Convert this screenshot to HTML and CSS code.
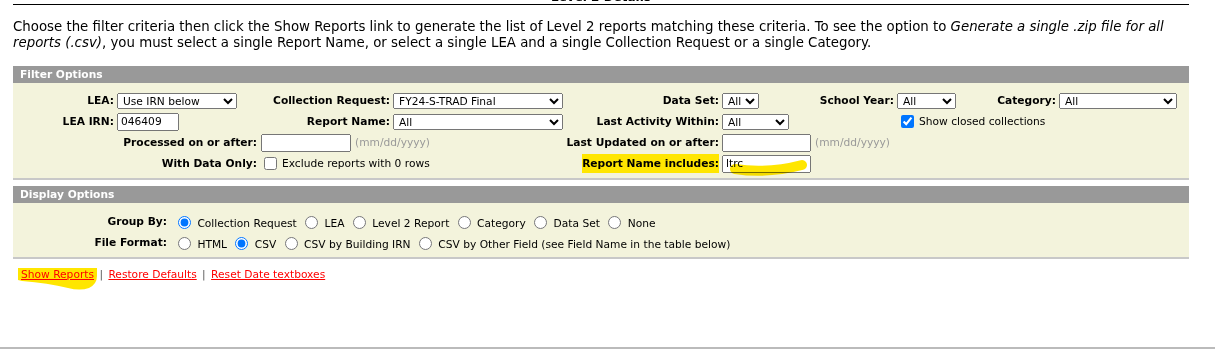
FILE: index.html
```html
<!DOCTYPE html>
<html lang="en">
<head>
  <meta charset="UTF-8">
  <title>Level 2 Details</title>
  <link rel="stylesheet" href="styles.css">
</head>
<body>

  <div class="page">
    <h1 class="page-title">Level 2 Details</h1>

    <p class="intro">Choose the filter criteria then click the Show Reports link to generate the list of Level 2 reports matching these criteria. To see the option to <em>Generate a single .zip file for all reports (.csv)</em>, you must select a single Report Name, or select a single LEA and a single Collection Request or a single Category.</p>

    <div class="section">
      <div class="section-head">Filter Options</div>
      <div class="section-body filter-grid">
        <!-- row 1 -->
        <label class="lbl">LEA:</label>
        <div class="ctl"><select class="sel-lea"><option>Use IRN below</option></select></div>
        <label class="lbl">Collection Request:</label>
        <div class="ctl"><select class="sel-wide"><option>FY24-S-TRAD Final</option></select></div>
        <label class="lbl">Data Set:</label>
        <div class="ctl"><select class="sel-dataset"><option>All</option></select></div>
        <label class="lbl">School Year:</label>
        <div class="ctl"><select class="sel-year"><option>All</option></select></div>
        <label class="lbl">Category:</label>
        <div class="ctl"><select class="sel-cat"><option>All</option></select></div>

        <!-- row 2 -->
        <label class="lbl">LEA IRN:</label>
        <div class="ctl"><input type="text" class="txt-irn" value="046409"></div>
        <label class="lbl">Report Name:</label>
        <div class="ctl"><select class="sel-wide"><option>All</option></select></div>
        <label class="lbl">Last Activity Within:</label>
        <div class="ctl"><select class="sel-activity"><option>All</option></select></div>
        <div></div>
        <div class="ctl span3"><input type="checkbox" class="chk" checked> Show closed collections</div>

        <!-- row 3 -->
        <label class="lbl span2">Processed on or after:</label>
        <div class="ctl span2"><input type="text" class="txt-date first"><span class="hint">(mm/dd/yyyy)</span></div>
        <label class="lbl">Last Updated on or after:</label>
        <div class="ctl span5"><input type="text" class="txt-date"><span class="hint">(mm/dd/yyyy)</span></div>

        <!-- row 4 -->
        <label class="lbl span2">With Data Only:</label>
        <div class="ctl span2"><input type="checkbox" class="chk"> Exclude reports with 0 rows</div>
        <label class="lbl"><span class="marker">Report Name includes:</span></label>
        <div class="ctl span5">
          <input type="text" class="txt-date" value="ltrc">
          <svg class="stroke-ltrc" width="90" height="24" viewBox="0 0 90 24">
            <path d="M8 13 Q40 18 75 9" fill="none" stroke="#ffe600" stroke-width="10" stroke-linecap="round"/>
          </svg>
        </div>
      </div>
    </div>

    <div class="section">
      <div class="section-head">Display Options</div>
      <div class="section-body display-grid">
        <div class="lbl">Group By:</div>
        <div class="opts">
          <label><input type="radio" name="group" checked> Collection Request</label>
          <label><input type="radio" name="group"> LEA</label>
          <label><input type="radio" name="group"> Level 2 Report</label>
          <label><input type="radio" name="group"> Category</label>
          <label><input type="radio" name="group"> Data Set</label>
          <label><input type="radio" name="group"> None</label>
        </div>
        <div class="lbl">File Format:</div>
        <div class="opts">
          <label><input type="radio" name="format"> HTML</label>
          <label><input type="radio" name="format" checked> CSV</label>
          <label><input type="radio" name="format"> CSV by Building IRN</label>
          <label><input type="radio" name="format"> CSV by Other Field (see Field Name in the table below)</label>
        </div>
      </div>
    </div>

    <div class="links">
      <span class="show-wrap">
        <svg class="stroke-show" width="82" height="24" viewBox="0 0 82 24">
          <path d="M0 0 H79 V8 Q79 16 71 20 Q62 23 50 20 Q30 15 4 13 L0 12 Z" fill="#ffe600"/>
        </svg>
        <a href="#">Show Reports</a>
      </span>
      <span class="sep">|</span>
      <a href="#">Restore Defaults</a>
      <span class="sep">|</span>
      <a href="#">Reset Date textboxes</a>
    </div>
  </div>

  <div class="bottom-rule"></div>

</body>
</html>
```

FILE: styles.css
```css
html {
  box-sizing: border-box;
}
*, *::before, *::after {
  box-sizing: inherit;
}

body {
  margin: 0;
  min-height: 100vh;
  display: flex;
  flex-direction: column;
  font-family: "DejaVu Sans", Verdana, sans-serif;
  font-size: 8pt;
  color: #000;
  background: #fff;
}

.page {
  width: 1176px;
  margin-left: 13px;
}

.page-title {
  margin: -10px 0 0;
  font-size: 9pt;
  line-height: 14px;
  text-align: center;
  border-bottom: 1px solid #000;
}

.intro {
  margin: 14px 0 15px;
  font-size: 10pt;
  line-height: 16px;
}

/* grey bar + beige panel */
.section + .section {
  margin-top: 6px;
}
.section-head {
  height: 17px;
  line-height: 17px;
  padding-left: 7px;
  background: #999;
  color: #fff;
  font-weight: bold;
}
.section-body {
  background: #f3f3dc;
  border-bottom: 2px solid #c8c8c8;
}

.filter-grid {
  display: grid;
  grid-template-columns: 104px 143px 133px 173px 156px 78px 97px 63px 99px 130px;
  grid-auto-rows: 21px;
  align-items: center;
  padding: 7px 0 4px;
}
.lbl {
  text-align: right;
  padding-right: 3px;
  font-weight: bold;
  white-space: nowrap;
}
.ctl {
  position: relative;
  display: flex;
  align-items: center;
  gap: 4px;
  white-space: nowrap;
}
.span2 { grid-column: span 2; }
.span3 { grid-column: span 3; }
.span5 { grid-column: span 5; }

select, input[type="text"] {
  font-family: "DejaVu Sans", Verdana, sans-serif;
  font-size: 8pt;
  margin: 0;
}
select {
  height: 16px;
  padding: 0 0 0 1px;
}
.sel-lea { width: 120px; }
.sel-wide { width: 170px; }
.sel-dataset { width: 37px; }
.sel-year { width: 59px; }
.sel-cat { width: 118px; }
.sel-activity { width: 67px; }

input[type="text"] {
  height: 18px;
  padding: 0 2px;
}
.txt-irn {
  width: 62px;
  height: 17px;
}
.txt-date {
  width: 89px;
}
.txt-date.first {
  width: 90px;
  margin-left: 1px;
}
.hint {
  color: #999;
}
.chk {
  margin: 3px 1px 3px 4px;
}

.marker {
  background: #ffe600;
  padding: 3px 0;
}
.stroke-ltrc {
  position: absolute;
  left: 5px;
  top: 1px;
  mix-blend-mode: multiply;
}

.display-grid {
  display: grid;
  grid-template-columns: 160px 1fr;
  grid-auto-rows: 21px;
  align-items: center;
  padding: 8px 0 4px;
}
.display-grid .lbl {
  padding-right: 6px;
}
.opts {
  white-space: nowrap;
}
.opts input {
  vertical-align: -2px;
}

.links {
  padding: 8px 8px;
  line-height: 16px;
}
.links a {
  color: #f00;
}
.sep {
  color: #555;
  margin: 0 2px;
}
.show-wrap {
  position: relative;
}
.stroke-show {
  position: absolute;
  left: -3px;
  top: 0px;
  mix-blend-mode: multiply;
}

.bottom-rule {
  margin-top: auto;
  border-top: 2px solid #bbb;
}
```
